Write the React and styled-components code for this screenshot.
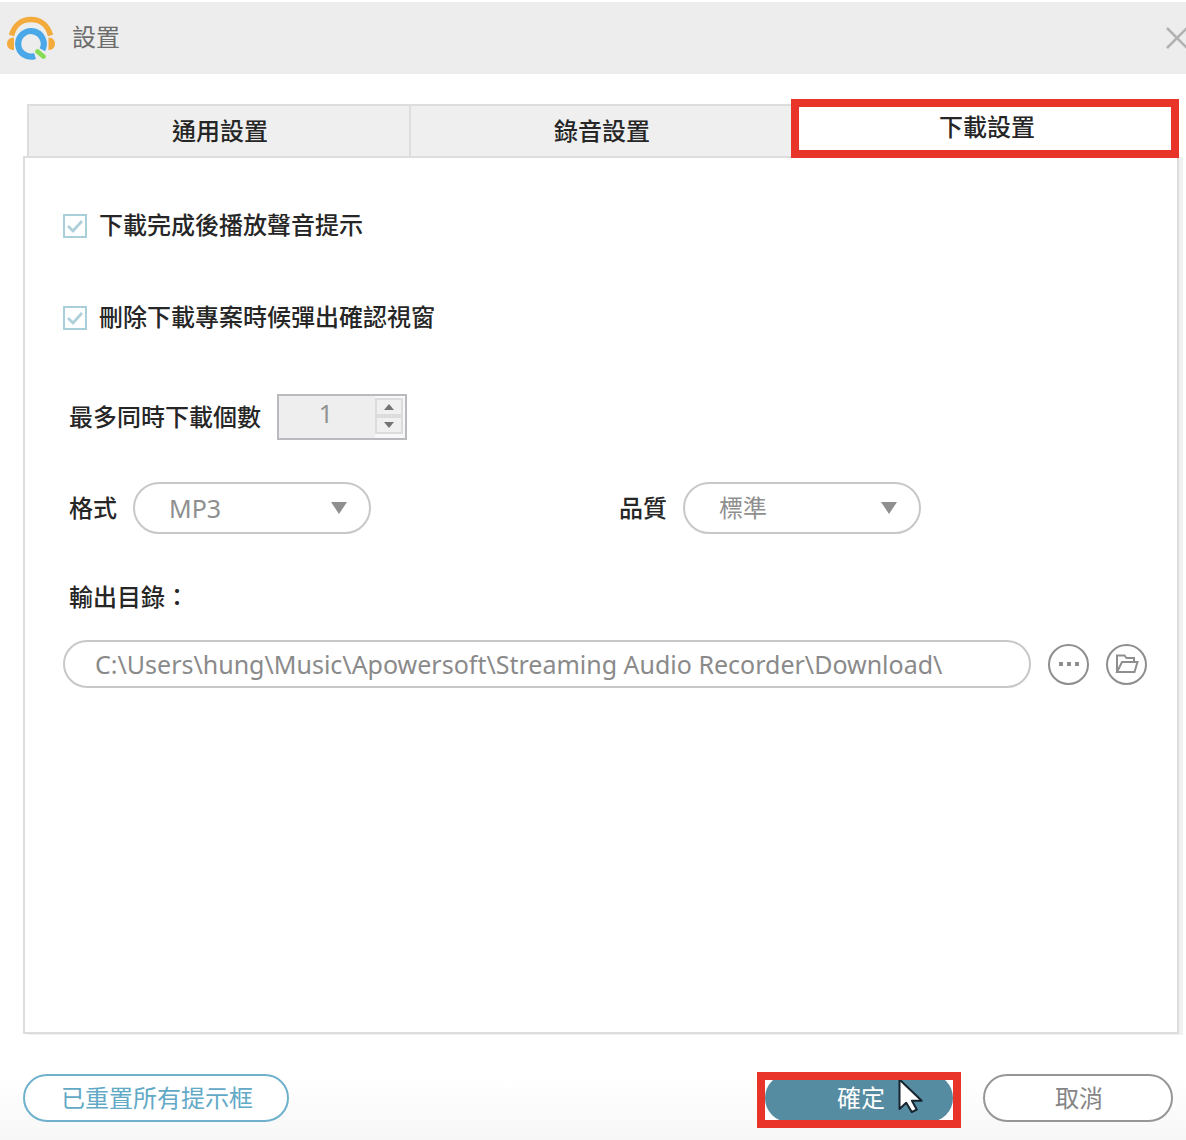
import React, { useState } from 'react';
import styled, { createGlobalStyle, css } from 'styled-components';

const GlobalStyle = createGlobalStyle`
  * {
    box-sizing: border-box;
  }

  body {
    margin: 0;
    background: #ffffff;
    font-family: "Noto Sans", "Noto Sans CJK TC", sans-serif;
    font-size: 24px;
    line-height: 24px;
    color: #262626;
  }

  button {
    font-family: inherit;
    font-size: inherit;
    line-height: inherit;
    padding: 0;
    cursor: pointer;
  }
`;

const tabs = ['通用設置', '錄音設置', '下載設置'];

const Logo = () => (
  <svg width="50" height="46" viewBox="0 0 50 46" fill="none">
    <path d="M5.500 20.500C8 10.500 15 4.500 25 4.500S42 10.500 44.500 20.500" stroke="#f3ab3d" strokeWidth="5.500" />
    <path d="M8 22.500v12.500C3.500 35 1 32 1 28.700S3.500 22.500 8 22.500z" fill="#f3ab3d" />
    <path d="M42.500 22.500v12.500c4 0 6.500-3 6.500-6.300S46.500 22.500 42.500 22.500z" fill="#f3ab3d" />
    <path d="M29 41A12.800 12.800 0 1 1 36.300 34.800" stroke="#4aa8e8" strokeWidth="6.200" />
    <path d="M31.500 36.500l6 5" stroke="#86dc52" strokeWidth="4.800" strokeLinecap="round" />
  </svg>
);

const CloseIcon = () => (
  <svg width="20" height="22" viewBox="0 0 20 22" fill="none" stroke="#b2b2b2" strokeWidth="2.600">
    <path d="M1 1l20 20M1 21L21 1" />
  </svg>
);

const CheckIcon = () => (
  <svg width="16" height="14" viewBox="0 0 16 14" fill="none">
    <path d="M1 7l5 5L15 2" stroke="#afd0da" strokeWidth="2.800" />
  </svg>
);

const FolderIcon = () => (
  <svg width="24" height="20" viewBox="0 0 24 20" fill="none" stroke="#8e8e8e" strokeWidth="2">
    <path d="M2 18V1.500h7.500l2 2.500H19v4M2 18h17.500L22.500 8H7L2 18z" />
  </svg>
);

const CursorIcon = () => (
  <svg width="26" height="38" viewBox="0 0 26 38">
    <path
      d="M1.500 1.500v29.500l6.700-6.300 5.600 9.300 5-2.300-4.800-9h9.700z"
      fill="#ffffff"
      stroke="#16242e"
      strokeWidth="2"
      strokeLinejoin="round"
    />
  </svg>
);

function App() {
  const [active, setActive] = useState(2);
  const [playSound, setPlaySound] = useState(true);
  const [confirmDelete, setConfirmDelete] = useState(true);

  return (
    <Window>
      <GlobalStyle />
      <TitleBar>
        <Logo />
        <Title>設置</Title>
        <CloseIcon />
      </TitleBar>

      <TabList>
        {tabs.map((tab, index) => (
          <Tab key={tab} $active={index === active} onClick={() => setActive(index)}>
            {tab}
          </Tab>
        ))}
      </TabList>

      <Panel>
        <CheckRow onClick={() => setPlaySound(!playSound)}>
          <CheckBox>{playSound && <CheckIcon />}</CheckBox>
          <CheckText>下載完成後播放聲音提示</CheckText>
        </CheckRow>
        <CheckRow $top={68} onClick={() => setConfirmDelete(!confirmDelete)}>
          <CheckBox>{confirmDelete && <CheckIcon />}</CheckBox>
          <CheckText>刪除下載專案時候彈出確認視窗</CheckText>
        </CheckRow>

        <Row $top={64}>
          <Label>最多同時下載個數</Label>
          <Spinner>
            <SpinnerValue>1</SpinnerValue>
            <SpinnerButtons>
              <SpinnerButton><Arrow $up $size={5} $height={6} $color="#747474" /></SpinnerButton>
              <SpinnerButton><Arrow $size={5} $height={6} $color="#747474" /></SpinnerButton>
            </SpinnerButtons>
          </Spinner>
        </Row>

        <SelectGrid>
          <Row>
            <Label>格式</Label>
            <Select>MP3<Arrow $size={8} $height={12} $color="#8f8f8f" /></Select>
          </Row>
          <Row>
            <Label>品質</Label>
            <Select $cjk>標準<Arrow $size={8} $height={12} $color="#8f8f8f" /></Select>
          </Row>
        </SelectGrid>

        <Row $top={52}>
          <Label>輸出目錄：</Label>
        </Row>
        <Row $top={31}>
          <PathField>C:\Users\hung\Music\Apowersoft\Streaming Audio Recorder\Download\</PathField>
          <RoundButton>
            <Dot />
            <Dot />
            <Dot />
          </RoundButton>
          <RoundButton>
            <FolderIcon />
          </RoundButton>
        </Row>
      </Panel>

      <Footer>
        <ResetButton>已重置所有提示框</ResetButton>
        <Highlight>
          <ConfirmButton>確定</ConfirmButton>
          <Pointer>
            <CursorIcon />
          </Pointer>
        </Highlight>
        <CancelButton>取消</CancelButton>
      </Footer>
    </Window>
  );
}

const Window = styled.div`
  display: flex;
  flex-direction: column;
  width: 1186px;
  height: 1140px;
  padding-top: 2px;
  overflow: hidden;
  background: linear-gradient(#ffffff 0, #ffffff 1080px, #f7f7f7 1140px);
`;

const TitleBar = styled.header`
  display: flex;
  align-items: center;
  flex: none;
  height: 72px;
  padding-left: 6px;
  background: #ededed;
`;

const Title = styled.h1`
  flex: 1;
  margin: -2px 0 0 16px;
  font-size: 24px;
  font-weight: 400;
  color: #6c6c6c;
`;

const TabList = styled.nav`
  display: grid;
  grid-template-columns: 382px 382px 388px;
  flex: none;
  height: 52px;
  margin: 30px 0 0 27px;
`;

const Tab = styled.button`
  height: 54px;
  padding-left: 2px;
  border: 2px solid #dddddd;
  border-right: 0;
  background: #efefef;
  color: #262626;
  font-weight: 500;

  ${({ $active }) =>
    $active &&
    css`
      position: relative;
      z-index: 1;
      height: 59px;
      margin-top: -5px;
      padding: 0 0 4px 4px;
      border: 8px solid #e93429;
      background: #ffffff;
    `}
`;

const Panel = styled.main`
  flex: none;
  width: 1156px;
  height: 878px;
  margin-left: 23px;
  padding: 56px 0 0 38px;
  border: 2px solid #dddddd;
  background: #ffffff;
  box-shadow: 4px 1px 0 #f1f1f1;
`;

const Row = styled.div`
  display: flex;
  align-items: center;
  margin-top: ${({ $top = 0 }) => $top}px;
`;

const CheckRow = styled(Row)`
  cursor: pointer;
`;

const CheckBox = styled.span`
  display: flex;
  align-items: center;
  justify-content: center;
  width: 24px;
  height: 24px;
  margin-right: 12px;
  border: 2px solid #a9cfdb;
`;

const CheckText = styled.span`
  margin-top: -2px;
  font-weight: 500;
`;

const Label = styled.span`
  margin: -1px 16px 0 6px;
  font-weight: 500;
`;

const Spinner = styled.div`
  display: flex;
  width: 130px;
  height: 46px;
  border: 2px solid #b9b9be;
  background: #eeeeee;
`;

const SpinnerValue = styled.span`
  flex: 1;
  padding: 5px 2px 0 0;
  text-align: center;
  font-size: 25px;
  color: #929292;
`;

const SpinnerButtons = styled.div`
  display: flex;
  flex-direction: column;
  width: 30px;
  padding: 2px 2px 0 0;
  background: #f8f8f8;
`;

const SpinnerButton = styled.span`
  display: flex;
  align-items: center;
  justify-content: center;
  height: 18px;
  border: 2px solid #dcdcdc;
  background: #f0f0f0;
`;

const Arrow = styled.i`
  border: ${({ $size }) => $size}px solid transparent;
  border-width: ${({ $up, $size, $height }) =>
    $up ? `0 ${$size}px ${$height}px` : `${$height}px ${$size}px 0`};
  border-top-color: ${({ $up, $color }) => ($up ? 'transparent' : $color)};
  border-bottom-color: ${({ $up, $color }) => ($up ? $color : 'transparent')};
`;

const SelectGrid = styled.div`
  display: grid;
  grid-template-columns: 550px 550px;
  margin-top: 42px;
`;

const Select = styled.div`
  display: flex;
  align-items: center;
  justify-content: space-between;
  width: 238px;
  height: 52px;
  padding: 0 22px 0 34px;
  border: 2px solid #c8c8c8;
  border-radius: 26px;
  font-size: ${({ $cjk }) => ($cjk ? 24 : 25)}px;
  color: #8f8f8f;
`;

const PathField = styled.div`
  width: 968px;
  height: 48px;
  padding: 10px 0 0 30px;
  border: 2px solid #c8c8c8;
  border-radius: 24px;
  font-size: 25px;
  color: #8a8a8a;
  white-space: nowrap;
`;

const RoundButton = styled.button`
  display: flex;
  align-items: center;
  justify-content: center;
  gap: 4px;
  width: 41px;
  height: 41px;
  margin-left: 17px;
  border: 2px solid #8e8e8e;
  border-radius: 50%;
  background: #ffffff;
`;

const Dot = styled.span`
  width: 4px;
  height: 4px;
  background: #8e8e8e;
`;

const Footer = styled.footer`
  display: flex;
  align-items: center;
  margin: 38px 0 0 23px;
  height: 56px;
  flex: none;
`;

const PillButton = styled.button`
  height: 48px;
  border: 2px solid #969696;
  border-radius: 24px;
  background: #ffffff;
  color: #858585;
`;

const ResetButton = styled(PillButton)`
  width: 266px;
  margin-top: -4px;
  padding-left: 2px;
  border-color: #6fb1cd;
  color: #62a9c6;
`;

const Highlight = styled.div`
  position: relative;
  display: flex;
  align-items: center;
  width: 204px;
  height: 56px;
  margin-left: auto;
  overflow: hidden;
  border: 8px solid #e93429;
  background: #ffffff;
`;

const ConfirmButton = styled(PillButton)`
  flex: 1;
  margin-top: -4px;
  padding-left: 4px;
  border: 0;
  background: #568ca1;
  color: #ffffff;
`;

const Pointer = styled.span`
  position: absolute;
  top: -2px;
  left: 133px;
  line-height: 0;
`;

const CancelButton = styled(PillButton)`
  width: 190px;
  margin: -4px 13px 0 22px;
  padding-left: 2px;
`;

export default App;
